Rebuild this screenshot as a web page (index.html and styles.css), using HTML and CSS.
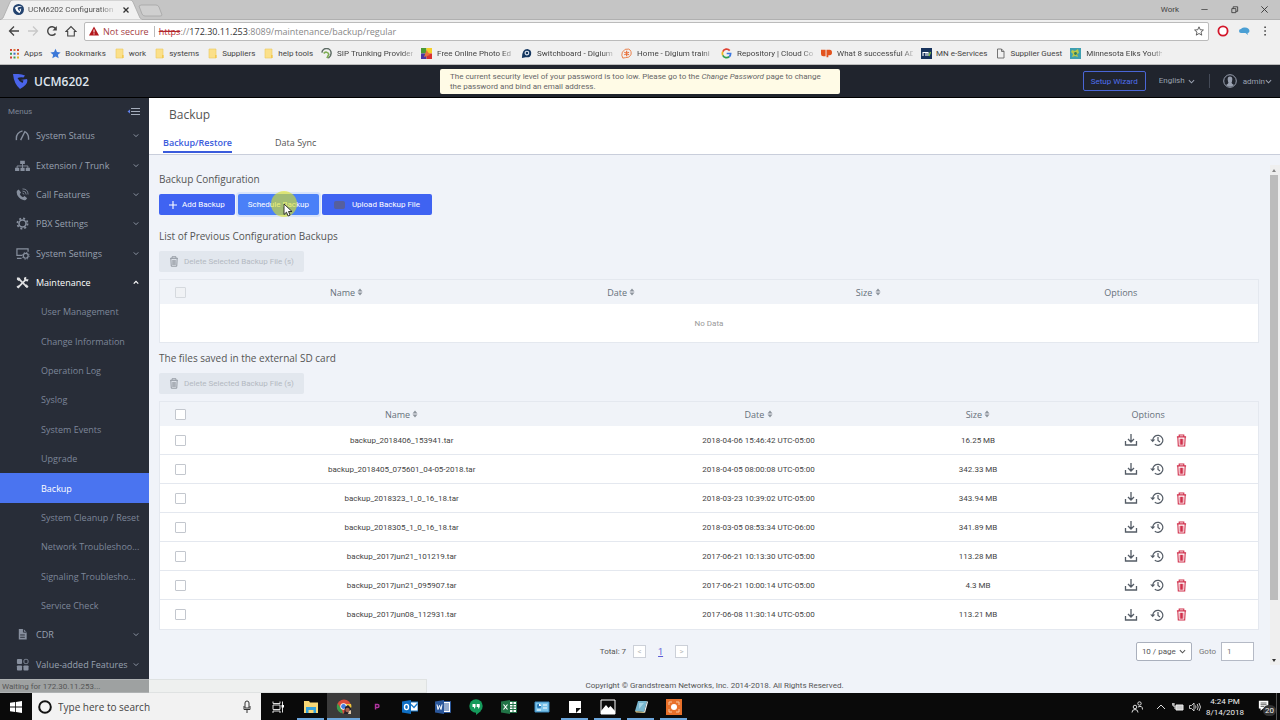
FILE: index.html
```html
<!DOCTYPE html>
<html lang="en">
<head>
  <meta charset="UTF-8">
  <meta name="viewport" content="width=device-width, initial-scale=1.0">
  <title>UCM6202 Configuration</title>
  <link rel="stylesheet" href="styles.css">
</head>
<body>
  <!-- shared icons -->
  <svg class="sprite" aria-hidden="true">
    <symbol id="i-down" viewBox="0 0 8 8"><path d="M1 2.5l3 3 3-3" fill="none" stroke="currentColor" stroke-width="1.2"/></symbol>
    <symbol id="i-up" viewBox="0 0 8 8"><path d="M1 5.5l3-3 3 3" fill="none" stroke="currentColor" stroke-width="1.6"/></symbol>
    <symbol id="i-folder" viewBox="0 0 11 11"><path d="M2 1h7v9H2z" fill="#fbe08a" stroke="#ecc95c" stroke-width=".6"/><path d="M8 7h1.600v3H8z" fill="#f3c94f"/></symbol>
    <symbol id="i-sort" viewBox="0 0 6 8"><path d="M.5 3.400L3 .4l2.500 3zM.5 4.600L3 7.600l2.500-3z" fill="currentColor"/></symbol>
    <symbol id="i-trash" viewBox="0 0 12 14"><path d="M1 3h10M3.500 2.500V1h5v1.500M2 3.500l.5 9.500h7l.5-9.500M4.600 5v6.500M6 5v6.500M7.400 5v6.500" fill="none" stroke="currentColor" stroke-width="1.200"/></symbol>
    <symbol id="i-download" viewBox="0 0 14 14"><path d="M7 1v7.500M4 6l3 3 3-3M1.500 8v4h11V8" fill="none" stroke="currentColor" stroke-width="1.300"/></symbol>
    <symbol id="i-history" viewBox="0 0 14 14"><path d="M2.800 7.500a5 5 0 1 1 2 3.800M8 4v3.500l2 1.500" fill="none" stroke="currentColor" stroke-width="1.200"/><path d="M.2 6.500h5L2.700 9.300z" fill="currentColor"/></symbol>
  </svg>

  <header class="browser">
    <div class="tabstrip">
      <svg class="tab-shape" viewBox="0 0 165 20" aria-hidden="true">
        <path d="M0 20l3-2L10 2q1-2 3-2h117q2 0 3 2l7 16 3 2z" fill="#f1f1f1" stroke="#aaa" stroke-width=".8"/>
        <path d="M141 5h15q2 0 3 2l3 8q0 1-2 1h-15q-2 0-3-2l-3-8z" fill="#cfcfcf" stroke="#a5a5a5" stroke-width=".8"/>
      </svg>
      <div class="tab">
        <svg class="ico11" viewBox="0 0 12 12"><circle cx="6" cy="6" r="6" fill="#23436f"/><path d="M2 4q4-3 8-1-4 0-5 1 0 2 2 4l1-2H6l3-1q0 3-2 5-4-2-5-6z" fill="#fff"/></svg>
        <span class="tab-title">UCM6202 Configuration</span>
        <button class="plain tab-close" aria-label="Close tab"><svg viewBox="0 0 8 8"><path d="M1.500 1.500l5 5m0-5l-5 5" stroke="#333" stroke-width="1.300"/></svg></button>
      </div>
      <div class="window-buttons">
        <span class="profile">Work</span>
        <button class="plain" aria-label="Minimize"><svg viewBox="0 0 10 10"><path d="M1.500 5h7" stroke="#555"/></svg></button>
        <button class="plain" aria-label="Restore"><svg viewBox="0 0 10 10"><path d="M2 4h4.500v4.500H2zM3.500 4V2H8.500v5h-2" fill="none" stroke="#333" stroke-width=".9"/></svg></button>
        <button class="plain" aria-label="Close"><svg viewBox="0 0 10 10"><path d="M1.500 1.500l7 7m0-7l-7 7" stroke="#333"/></svg></button>
      </div>
    </div>

    <div class="toolbar">
      <button class="plain" aria-label="Back"><svg viewBox="0 0 12 12"><path d="M11 6H2M6 1.500L1.500 6 6 10.500" fill="none" stroke="#444" stroke-width="1.300"/></svg></button>
      <button class="plain" aria-label="Forward"><svg viewBox="0 0 12 12"><path d="M1 6h9M6 1.500L10.500 6 6 10.500" fill="none" stroke="#c8c8c8" stroke-width="1.300"/></svg></button>
      <button class="plain" aria-label="Reload"><svg viewBox="0 0 12 12"><path d="M9.500 8.500a4.300 4.300 0 1 1 0-5" fill="none" stroke="#444" stroke-width="1.400"/><path d="M10.800 1v4.500H6.500z" fill="#444"/></svg></button>
      <button class="plain" aria-label="Home"><svg viewBox="0 0 12 12"><path d="M1 6.500L6 1.500l5 5H9.300V11H2.700V6.500z" fill="none" stroke="#444" stroke-width="1.100"/></svg></button>
      <div class="address">
        <svg class="ico10" viewBox="0 0 10 10"><path d="M5 .5L10 9.500H0z" fill="#b3161b"/><path d="M5 3.500v3M5 7.300v1.200" stroke="#fff"/></svg>
        <span class="not-secure">Not secure</span>
        <span class="url"><s>https</s>://<b>172.30.11.253</b>:8089/maintenance/backup/regular</span>
        <svg class="ico10" viewBox="0 0 12 12"><path d="M6 1l1.500 3.500 3.800.3-2.900 2.500.9 3.700L6 9l-3.300 2 .9-3.700L.7 4.800l3.800-.3z" fill="none" stroke="#444"/></svg>
      </div>
      <button class="plain" aria-label="Ad blocker"><svg viewBox="0 0 12 12"><circle cx="6" cy="6" r="4.600" fill="#fff" stroke="#d3172b" stroke-width="1.800"/><path d="M5 3.500h2.500V8L6.500 9 5 8z" fill="#fff"/></svg></button>
      <button class="plain" aria-label="Extension"><svg viewBox="0 0 12 12"><path d="M1 6q0-2 2-2 1-2 4-1.500Q11 2.500 11.500 6 11.500 8 9.500 8l.5 2-2.500-2H3Q1 8 1 6z" fill="#4a9fd4"/></svg></button>
      <button class="plain" aria-label="Menu"><svg viewBox="0 0 12 12"><path d="M5.300 1.500h1.600v1.600H5.300zM5.300 5.200h1.600v1.600H5.300zM5.300 8.900h1.600v1.600H5.300z" fill="#444"/></svg></button>
    </div>

    <nav class="bookmarks">
      <a href="#"><svg viewBox="0 0 11 11"><path d="M1 1h2v2H1zM8 1h2v2H8zM1 8.500h2v2H1z" fill="#cf4436"/><path d="M4.500 1h2v2h-2zM8 4.700h2v2H8z" fill="#d9752f"/><path d="M1 4.700h2v2H1zM4.500 8.500h2v2h-2z" fill="#3f9b4f"/><path d="M4.500 4.700h2v2h-2z" fill="#3c6fc4"/><path d="M8 8.500h2v2H8z" fill="#d9b52f"/></svg><span>Apps</span></a>
      <a href="#"><svg viewBox="0 0 12 12"><path d="M6 .8l1.600 3.600 4 .4-3 2.600.9 3.900L6 9.200l-3.500 2.100.9-3.900-3-2.600 4-.4z" fill="#3b78d8"/></svg><span>Bookmarks</span></a>
      <a href="#"><svg><use href="#i-folder"/></svg><span>work</span></a>
      <a href="#"><svg><use href="#i-folder"/></svg><span>systems</span></a>
      <a href="#"><svg><use href="#i-folder"/></svg><span>Suppliers</span></a>
      <a href="#"><svg><use href="#i-folder"/></svg><span>help tools</span></a>
      <a href="#" class="long"><svg viewBox="0 0 12 12"><path d="M1 5a5 5 0 0 1 10 1q0 3-3 5" fill="none" stroke="#5c6a63" stroke-width="1.600"/><path d="M3 6a3 3 0 0 1 5.500 1l-2 4" fill="none" stroke="#7fae54" stroke-width="1.800"/></svg><span>SIP Trunking Provider</span></a>
      <a href="#" class="long"><svg viewBox="0 0 11 11"><path d="M0 0h5.500v5.500H0z" fill="#4a9a34"/><path d="M5.500 0H11v5.500H5.500z" fill="#f4cf29"/><path d="M0 5.500h5.500V11H0z" fill="#4935a5"/><path d="M5.500 5.500H11V11H5.500z" fill="#d93131"/><path d="M5.500 2L9 7 3 9z" fill="#e9733a"/></svg><span>Free Online Photo Ed</span></a>
      <a href="#" class="long"><svg viewBox="0 0 12 12"><path d="M1 11q0-10 6-10 5 1 4 6-1 4-6 3z" fill="#14365f"/><circle cx="6.500" cy="5.500" r="2" fill="none" stroke="#dfe8f2" stroke-width="1.200"/></svg><span>Switchboard - Digium</span></a>
      <a href="#" class="long"><svg viewBox="0 0 12 12"><path d="M2 11Q0 8 1.500 4.500 4 0 8.500 1.200 12 3 10.800 7.500 9 11 5 10.500z" fill="none" stroke="#e8773e"/><path d="M6.200 3v6M3.600 4.500l5.200 3M8.800 4.500l-5.200 3" stroke="#e8662c" stroke-width="1.200"/></svg><span>Home - Digium traini</span></a>
      <a href="#" class="long"><svg viewBox="0 0 12 12"><path d="M9.500 2.800A4.500 4.500 0 0 0 2 4" fill="none" stroke="#e04334" stroke-width="1.900"/><path d="M2 4a4.500 4.500 0 0 0 0 4" fill="none" stroke="#f2b61f" stroke-width="1.900"/><path d="M2 8a4.500 4.500 0 0 0 7 1.500" fill="none" stroke="#2f9f50" stroke-width="1.900"/><path d="M6.200 6h4.300q0 2.300-1.500 3.500" fill="none" stroke="#3b78e0" stroke-width="1.900"/></svg><span>Repository | Cloud Co</span></a>
      <a href="#" class="long"><svg viewBox="0 0 12 12"><path d="M0 2h5v7H2.500Q0 9 0 6.500zM6 2h3.500Q12 2 12 5T9.500 8H8v2H6z" fill="#e2531f"/></svg><span>What 8 successful AD</span></a>
      <a href="#"><svg viewBox="0 0 11 11"><path d="M0 0h11v11H0z" fill="#17335c"/><path d="M2 8V4.500h3V8M5 4.500h2V8" fill="none" stroke="#fff" stroke-width="1.100"/><path d="M8 8l1.500-4" stroke="#7fbf4a" stroke-width="1.400"/></svg><span>MN e-Services</span></a>
      <a href="#"><svg viewBox="0 0 11 11"><path d="M2.500 1h4l2.500 2.500V10h-6.500zM6.500 1v2.500H9" fill="none" stroke="#666" stroke-width=".9"/></svg><span>Supplier Guest</span></a>
      <a href="#" class="long"><svg viewBox="0 0 11 11"><path d="M0 0h11v11H0z" fill="#3f9fb0"/><path d="M2 2l3 1 3-2 1 4-2 1 1 3-3-1-3 1 1-3-2-2z" fill="#b9c84a"/><circle cx="5.500" cy="5.500" r="1.400" fill="#2f7a58"/></svg><span>Minnesota Elks Youth</span></a>
    </nav>
  </header>

  <div class="app">
    <header class="app-header">
      <div class="brand">
        <svg viewBox="0 0 15 15"><path d="M0 0q7-.5 12 1.500L10.500 3.500Q7 3 4.500 4 6 7.500 9.500 9l1-2.500L7.500 6 14 5q2 5-7 10Q1 10 0 0z" fill="#4a64ea"/></svg>
        <span>UCM6202</span>
      </div>
      <p class="notice">The current security level of your password is too low. Please go to the <em>Change Password</em> page to change<br>the password and bind an email address.</p>
      <div class="header-tools">
        <button class="wizard">Setup Wizard</button>
        <label class="pick lang"><select aria-label="Language"><option>English</option></select><svg><use href="#i-down"/></svg></label>
        <button class="plain user">
          <svg class="avatar" viewBox="0 0 14 14"><circle cx="7" cy="7" r="6.300" fill="none" stroke="#9aa1b0"/><path d="M7 2.500q2.500 0 2.300 3Q9 8 8.500 8.500q0 1 2.500 2.500-1.500 1.800-4 1.800T3 11q2.500-1.500 2.500-2.500Q5 8 4.700 5.500q-.2-3 2.300-3z" fill="#9aa1b0"/></svg>
          <span>admin</span><svg class="chev"><use href="#i-down"/></svg>
        </button>
      </div>
    </header>

    <div class="app-body">
      <aside class="sidebar">
        <div class="menus">Menus
          <button class="plain" aria-label="Collapse menu"><svg viewBox="0 0 13 9"><path d="M4 1.500h9M4 4.500h9M4 7.500h9" stroke="#a5adbb" stroke-width="1.100"/><path d="M3 2.500v4L.5 4.500z" fill="#5f7fe8"/></svg></button>
        </div>
        <ul class="nav">
          <li><a href="#"><svg class="nav-icon" viewBox="0 0 16 14"><path d="M1.500 12q-1-8 6.500-10M10 2.500q5 2 4.500 9M6 12L10.500 3" fill="none" stroke="currentColor" stroke-width="1.500"/></svg><span>System Status</span><svg class="chev"><use href="#i-down"/></svg></a></li>
          <li><a href="#"><svg class="nav-icon" viewBox="0 0 16 14"><path d="M5.500 2h5v3.500h-5zM0 9.500h4.500V13H0zM5.800 9.500h4.500V13H5.800zM11.500 9.500H16V13h-4.500z" fill="currentColor"/><path d="M8 5v5M2.200 10V7.500h11.600V10" fill="none" stroke="currentColor"/></svg><span>Extension / Trunk</span><svg class="chev"><use href="#i-down"/></svg></a></li>
          <li><a href="#"><svg class="nav-icon" viewBox="0 0 16 14"><path d="M2 3l2-1.500L6.500 5 5 6.500q1 2.500 3.500 3.500l1.700-1.300L13 11l-1.500 2Q7 14 4 10 1 6.500 2 3z" fill="currentColor"/><path d="M8 5.500q1.500 0 1.500 1.500M8 3.300q4 0 4 3.700M8 1q6 0 6 6" fill="none" stroke="currentColor" stroke-width=".9"/></svg><span>Call Features</span><svg class="chev"><use href="#i-down"/></svg></a></li>
          <li><a href="#"><svg class="nav-icon" viewBox="0 0 16 14"><circle cx="8" cy="7" r="3.800" fill="none" stroke="currentColor" stroke-width="1.700"/><circle cx="8" cy="7" r="5.500" fill="none" stroke="currentColor" stroke-width="1.800" stroke-dasharray="2.160 2.160"/></svg><span>PBX Settings</span><svg class="chev"><use href="#i-down"/></svg></a></li>
          <li><a href="#"><svg class="nav-icon" viewBox="0 0 16 14"><path d="M7.500 9H2V2h12v3M2 12.300h5" fill="none" stroke="currentColor" stroke-width="1.300"/><circle cx="11.500" cy="9.500" r="2.600" fill="none" stroke="currentColor" stroke-width="1.300"/><circle cx="11.500" cy="9.500" r="3.700" fill="none" stroke="currentColor" stroke-dasharray="1.450 1.450"/></svg><span>System Settings</span><svg class="chev"><use href="#i-down"/></svg></a></li>
          <li class="open"><a href="#"><svg class="nav-icon" viewBox="0 0 16 14"><path d="M3 12.500L11 4.500M4 3l9 9" stroke="currentColor" stroke-width="1.900"/><path d="M10 5l-.5-3L12 .8v2.700h2.500l-.8 2.500zM2 1.500l2.500 0 1.500 2-2 2-2-1.500zM10.500 11l2-2 2 2.500-1.500 1.500zM1.500 11.500l2-1.500 1.500 1.500L3.500 13.500z" fill="currentColor"/></svg><span>Maintenance</span><svg class="chev"><use href="#i-up"/></svg></a></li>
          <li class="sub"><a href="#"><span>User Management</span></a></li>
          <li class="sub"><a href="#"><span>Change Information</span></a></li>
          <li class="sub"><a href="#"><span>Operation Log</span></a></li>
          <li class="sub"><a href="#"><span>Syslog</span></a></li>
          <li class="sub"><a href="#"><span>System Events</span></a></li>
          <li class="sub"><a href="#"><span>Upgrade</span></a></li>
          <li class="sub active"><a href="#"><span>Backup</span></a></li>
          <li class="sub"><a href="#"><span>System Cleanup / Reset</span></a></li>
          <li class="sub"><a href="#"><span>Network Troubleshoo...</span></a></li>
          <li class="sub"><a href="#"><span>Signaling Troublesho...</span></a></li>
          <li class="sub"><a href="#"><span>Service Check</span></a></li>
          <li><a href="#"><svg class="nav-icon" viewBox="0 0 16 14"><path d="M4 1h5l3.500 3.500V12.500H4z" fill="currentColor"/><path d="M9 1v3.500h3.500M5.500 7.500h5M5.500 10h5" fill="none" stroke="#282d38"/></svg><span>CDR</span><svg class="chev"><use href="#i-down"/></svg></a></li>
          <li><a href="#"><svg class="nav-icon" viewBox="0 0 16 14"><rect x="2" y="1" width="5.500" height="5.500" rx="1" fill="currentColor"/><rect x="2" y="8" width="5.500" height="5.500" rx="1" fill="currentColor"/><rect x="9" y="8" width="5.500" height="5.500" rx="1" fill="currentColor"/><rect x="9.500" y="1.500" width="4.500" height="4.500" rx="1.500" fill="none" stroke="currentColor"/></svg><span>Value-added Features</span><svg class="chev"><use href="#i-down"/></svg></a></li>
        </ul>
      </aside>

      <main class="main">
        <div class="page-head">
          <h1>Backup</h1>
          <nav class="tabs">
            <a href="#" class="current">Backup/Restore</a>
            <a href="#">Data Sync</a>
          </nav>
        </div>

        <div class="scroll-area">
          <div class="content">
            <h2>Backup Configuration</h2>
            <div class="actions">
              <button class="btn"><svg viewBox="0 0 8 8"><path d="M4 0v8M0 4h8" stroke="#fff" stroke-width="1.100"/></svg>Add Backup</button>
              <button class="btn hover">Schedule Backup
                <span class="pointer"><svg viewBox="0 0 10 14"><path d="M1 1v10.500l2.500-2.300 1.600 3.800 2-.9-1.600-3.600H9z" fill="#fff" stroke="#222" stroke-width=".9"/></svg></span>
              </button>
              <button class="btn upload"><i></i>Upload Backup File</button>
            </div>

            <h2>List of Previous Configuration Backups</h2>
            <button class="btn disabled" disabled><svg><use href="#i-trash"/></svg>Delete Selected Backup File (s)</button>
            <table class="grid local">
              <thead>
                <tr>
                  <th class="c-check"><input type="checkbox" aria-label="Select all" disabled></th>
                  <th class="c-name">Name <svg><use href="#i-sort"/></svg></th>
                  <th class="c-date">Date <svg><use href="#i-sort"/></svg></th>
                  <th class="c-size">Size <svg><use href="#i-sort"/></svg></th>
                  <th>Options</th>
                </tr>
              </thead>
              <tbody>
                <tr><td colspan="5" class="empty">No Data</td></tr>
              </tbody>
            </table>

            <h2 class="tight">The files saved in the external SD card</h2>
            <button class="btn disabled" disabled><svg><use href="#i-trash"/></svg>Delete Selected Backup File (s)</button>
            <table class="grid sdcard">
              <thead>
                <tr>
                  <th class="c-check"><input type="checkbox" aria-label="Select all"></th>
                  <th class="c-name">Name <svg><use href="#i-sort"/></svg></th>
                  <th class="c-date">Date <svg><use href="#i-sort"/></svg></th>
                  <th class="c-size">Size <svg><use href="#i-sort"/></svg></th>
                  <th>Options</th>
                </tr>
              </thead>
              <tbody id="files"></tbody>
            </table>

            <div class="pagination">
              <div class="pages">
                <span>Total: 7</span>
                <button class="step" aria-label="Previous page">&lt;</button>
                <a href="#">1</a>
                <button class="step" aria-label="Next page">&gt;</button>
              </div>
              <label class="pick per-page"><select aria-label="Rows per page"><option>10 / page</option></select><svg><use href="#i-down"/></svg></label>
              <label class="goto">Goto <input type="text" value="1"></label>
            </div>
          </div>
          <div class="scrollbar"><span class="arrow up"></span><span class="thumb"></span><span class="arrow down"></span></div>
        </div>
        <footer class="copyright">Copyright © Grandstream Networks, Inc. 2014-2018. All Rights Reserved.</footer>
      </main>
    </div>
    <div class="status">Waiting for 172.30.11.253...</div>
  </div>

  <footer class="taskbar">
    <button class="plain start" aria-label="Start"><svg viewBox="0 0 12 12"><path d="M0 1.800L5.200 1v4.600H0zM6 .9L12 0v5.600H6zM0 6.400h5.200V11L0 10.200zM6 6.400h6V12l-6-.9z" fill="#fff"/></svg></button>
    <label class="search">
      <svg viewBox="0 0 14 14"><circle cx="7" cy="7" r="5.800" fill="none" stroke="#111" stroke-width="2"/></svg>
      <input type="text" placeholder="Type here to search" aria-label="Search">
      <svg viewBox="0 0 14 14"><path d="M5 3q0-2 2-2t2 2v5H5zM4 6v3.500h6V6M7 9.500V13" fill="none" stroke="#333"/></svg>
    </label>
    <div class="pinned">
      <button class="plain" aria-label="Task view"><svg viewBox="0 0 16 16"><path d="M3 6h7v4.500H3zM3 2.500v2h7v-2M3 14v-2h7v2M12.500 2.500v11" fill="none" stroke="#ddd"/><path d="M11.500 6h2.500v2.500h-2.500z" fill="#fff"/></svg></button>
      <button class="plain running" aria-label="File Explorer"><svg viewBox="0 0 16 16"><path d="M1 2h5l1 1.500h8V14H1z" fill="#f8d775"/><path d="M3 8h10v6h-2.500v-3h-5v3H3z" fill="#35a3dc"/></svg></button>
      <button class="plain running focus" aria-label="Chrome"><svg viewBox="0 0 16 16"><circle cx="8" cy="7.500" r="7" fill="#d94b3c"/><path d="M1.500 4.500L6 11l1 3.500A7 7 0 0 1 1.500 4.500z" fill="#3b9b4c"/><path d="M8 5h7a7 7 0 0 1-5 9z" fill="#efc33a"/><circle cx="7.500" cy="7.500" r="3.200" fill="#fff"/><circle cx="7.500" cy="7.500" r="2.400" fill="#3f7be0"/><path d="M9 8l3-2 3 3v6H8z" fill="#24202a"/><circle cx="11.500" cy="11" r="2.200" fill="#a4604f"/><path d="M13 12l2-1v4h-3z" fill="#e0c8a8"/></svg></button>
      <button class="plain" aria-label="Publisher"><svg viewBox="0 0 16 16"><path d="M6.500 10.500V5.500h2q1.500 0 1.500 1.500T8.500 8.500H7" fill="none" stroke="#b0359f" stroke-width="1.400"/></svg></button>
      <button class="plain" aria-label="Outlook"><svg viewBox="0 0 16 16"><path d="M8 3h8v9H8z" fill="#fff" stroke="#1a78c8"/><path d="M9 5.500l3 3 3.500-4" fill="none" stroke="#1a78c8" stroke-width="1.300"/><path d="M0 2.500L9 1v14l-9-1.500z" fill="#0f6fc4"/><ellipse cx="4.500" cy="8" rx="2" ry="2.600" fill="none" stroke="#fff" stroke-width="1.400"/></svg></button>
      <button class="plain" aria-label="Word"><svg viewBox="0 0 16 16"><path d="M8 2.500h7.500v11H8z" fill="#fff" stroke="#2b579a"/><path d="M9 5h5M9 7h5M9 9h5M9 11h5" stroke="#2b579a"/><path d="M0 2.500L9 1v14l-9-1.500z" fill="#2b579a"/><path d="M2 5.500l1 5 1.500-4 1.500 4 1-5" fill="none" stroke="#fff"/></svg></button>
      <button class="plain" aria-label="Hangouts"><svg viewBox="0 0 16 16"><circle cx="8" cy="7" r="6.700" fill="#159a5b"/><path d="M8 12h5l-5 4z" fill="#159a5b"/><path d="M4.500 5h3v3L6 10V8H4.500zM8.700 5h3v3l-1.500 2V8H8.700z" fill="#fff"/></svg></button>
      <button class="plain" aria-label="Excel"><svg viewBox="0 0 16 16"><path d="M8 2.500h7.500v11H8z" fill="#fff" stroke="#217346"/><path d="M9 5.500h6M9 8h6M9 10.500h6M12 3v10" stroke="#217346"/><path d="M0 2.500L9 1v14l-9-1.500z" fill="#217346"/><path d="M2.500 5.500l4 5M6.500 5.500l-4 5" stroke="#fff" stroke-width="1.200"/></svg></button>
      <button class="plain" aria-label="Control panel"><svg viewBox="0 0 16 16"><path d="M1 3h14v10H1z" fill="#7cc4ea" stroke="#3a8ac0"/><circle cx="5" cy="7" r="2.200" fill="#2a78b4"/><path d="M5 7V4.800A2.200 2.200 0 0 1 7.200 7z" fill="#fff"/><path d="M9 6h4M9 9h4M3 11h4" stroke="#fff"/></svg></button>
      <button class="plain running" aria-label="Sticky notes"><svg viewBox="0 0 16 16"><path d="M2 2h12v12H2z" fill="#fff"/><path d="M9 14V9h5z" fill="#111"/><path d="M10 14l4-4v4z" fill="#fff"/></svg></button>
      <button class="plain running" aria-label="Photos"><svg viewBox="0 0 16 16"><path d="M1 1h14v14H1z" fill="#0b0b0b" stroke="#fff"/><path d="M1 12l5-6 2.500 3L10.500 7 15 12v3H1z" fill="#fff"/></svg></button>
      <button class="plain running" aria-label="Notepad"><svg viewBox="0 0 16 16"><path d="M5 2l9 0-3 11-9-1z" fill="#79b7cf"/><path d="M14 2l1 1-3 11-1-1z" fill="#e9eef0"/><path d="M2 12l9 1 1 1-9-.5z" fill="#d8c98e"/><path d="M6 4l5 0-5 6z" fill="#a8d5e6"/></svg></button>
      <button class="plain running" aria-label="Recorder"><svg viewBox="0 0 16 16"><path d="M0 0h16v16H0z" fill="#e8702a"/><path d="M3 6V3h3M10 3h3v3M13 10v3h-3M6 13H3v-3" fill="none" stroke="#f7c6a0"/><circle cx="8" cy="8" r="3" fill="#fff"/></svg></button>
    </div>
    <div class="tray">
      <svg viewBox="0 0 12 12"><circle cx="4" cy="6" r="1.800" fill="none" stroke="#ddd"/><path d="M1 11.500q0-3 3-3t3 3" fill="none" stroke="#ddd"/><circle cx="8.500" cy="2.500" r="1.700" fill="none" stroke="#ddd"/><path d="M7 6q4.500-2 4.500 2.500" fill="none" stroke="#ddd"/></svg>
      <svg class="tray-up" viewBox="0 0 12 12"><path d="M2 8l4-4 4 4" fill="none" stroke="#ddd"/></svg>
      <svg viewBox="0 0 12 12"><path d="M4 4h7v5H4z" fill="#ccc" stroke="#eee"/><path d="M0 3h3M1 2v3h2v3" fill="none" stroke="#eee"/></svg>
      <svg viewBox="0 0 12 12"><path d="M.5 4.500h2L5 2v8L2.500 7.500h-2z" fill="none" stroke="#ddd" stroke-width=".9"/><path d="M6.500 4.500q1 1.500 0 3M8.200 3q2 3 0 6M10 2q3 4 0 8" fill="none" stroke="#ddd" stroke-width=".9"/></svg>
      <div class="clock">4:24 PM<br>8/14/2018</div>
      <div class="notify"><svg viewBox="0 0 14 14"><path d="M1 1h11v9H6l-3 2.500V10H1z" fill="#fff"/><path d="M3 3.500h7M3 5.500h7M3 7.500h4" stroke="#222" stroke-width=".8"/></svg><span class="count">20</span></div>
    </div>
  </footer>

  <script>
    const files = [
      ["backup_2018406_153941.tar", "2018-04-06 15:46:42 UTC-05:00", "16.25 MB"],
      ["backup_2018405_075601_04-05-2018.tar", "2018-04-05 08:00:08 UTC-05:00", "342.33 MB"],
      ["backup_2018323_1_0_16_18.tar", "2018-03-23 10:39:02 UTC-05:00", "343.94 MB"],
      ["backup_2018305_1_0_16_18.tar", "2018-03-05 08:53:34 UTC-06:00", "341.89 MB"],
      ["backup_2017jun21_101219.tar", "2017-06-21 10:13:30 UTC-05:00", "113.28 MB"],
      ["backup_2017jun21_095907.tar", "2017-06-21 10:00:14 UTC-05:00", "4.3 MB"],
      ["backup_2017jun08_112931.tar", "2017-06-08 11:30:14 UTC-05:00", "113.21 MB"]
    ];

    document.getElementById("files").innerHTML = files.map(([name, date, size]) => `
      <tr>
        <td><input type="checkbox" aria-label="Select ${name}"></td>
        <td>${name}</td>
        <td>${date}</td>
        <td>${size}</td>
        <td class="options"><div>
          <button class="plain" aria-label="Download"><svg><use href="#i-download"/></svg></button>
          <button class="plain" aria-label="Restore"><svg><use href="#i-history"/></svg></button>
          <button class="plain delete" aria-label="Delete"><svg><use href="#i-trash"/></svg></button>
        </div></td>
      </tr>`).join("");
  </script>
</body>
</html>
```
FILE: styles.css
```css
* {
  margin: 0;
  padding: 0;
  box-sizing: border-box;
}

body {
  height: 100vh;
  display: flex;
  flex-direction: column;
  overflow: hidden;
  font-family: Roboto, "Open Sans", sans-serif;
  font-size: 8px;
  color: #555;
}

button, input, select {
  font: inherit;
  color: inherit;
}

a {
  color: inherit;
  text-decoration: none;
}

svg {
  display: block;
  flex: none;
}

.sprite {
  position: absolute;
  width: 0;
  height: 0;
}

.plain {
  border: none;
  background: none;
  display: flex;
  align-items: center;
  justify-content: center;
  flex: none;
}

.chev {
  width: 7px;
  height: 7px;
}

.ico10 {
  width: 10px;
  height: 10px;
}

.ico11 {
  width: 11px;
  height: 11px;
}

.brand, .nav, .page-head, h2, th, .address, .search {
  font-family: "Open Sans", "Noto Sans", sans-serif;
}

/* browser */
.browser {
  flex: none;
  background: #f0f0f0;
}

.tabstrip {
  position: relative;
  height: 20px;
  display: flex;
  justify-content: space-between;
  background: #c5c5c5;
  border-bottom: 1px solid #b0b0b0;
}

.tab-shape {
  position: absolute;
  left: 0;
  top: 0;
  width: 165px;
  height: 20px;
}

.tab {
  position: relative;
  width: 130px;
  padding-left: 13px;
  display: flex;
  align-items: center;
  gap: 4px;
}

.tab-title {
  flex: 1;
  white-space: nowrap;
  -webkit-mask-image: linear-gradient(90deg, #000 80%, transparent);
}

.tab-close svg {
  width: 8px;
  height: 8px;
}

.window-buttons {
  display: flex;
  align-items: center;
  gap: 21px;
  padding-right: 11px;
}

.window-buttons svg {
  width: 9px;
  height: 9px;
}

.profile {
  color: #444;
}

.toolbar {
  height: 22px;
  padding: 0 8px;
  display: flex;
  align-items: center;
  gap: 7px;
}

.toolbar button svg {
  width: 12px;
  height: 12px;
}

.address {
  flex: 1;
  height: 19px;
  padding: 0 4px;
  display: flex;
  align-items: center;
  gap: 4px;
  background: #fff;
  border: 1px solid #bbb;
  border-radius: 2px;
  font-size: 9px;
}

/* extension buttons right of the address bar */
.address ~ button {
  width: 14px;
}

.not-secure {
  color: #a54044;
  padding-right: 5px;
  border-right: 1px solid #bbb;
  line-height: 11px;
}

.url {
  flex: 1;
  color: #888;
}

.url b {
  font-weight: normal;
  color: #333;
}

.url s {
  color: #b3262b;
}

.bookmarks {
  height: 23px;
  padding-left: 9px;
  display: flex;
  align-items: center;
  gap: 8px;
  color: #444;
  border-bottom: 1px solid #bbb;
}

.bookmarks a {
  display: flex;
  align-items: center;
  gap: 4px;
  white-space: nowrap;
}

.bookmarks svg {
  width: 11px;
  height: 11px;
}

.bookmarks .long {
  gap: 5px;
}

.bookmarks .long span {
  width: 76px;
  -webkit-mask-image: linear-gradient(90deg, #000 85%, transparent 105%);
}

/* app */
.app {
  position: relative;
  flex: 1;
  min-height: 0;
  display: flex;
  flex-direction: column;
}

.app-header {
  height: 33px;
  flex: none;
  display: grid;
  grid-template-columns: 1fr auto 1fr;
  align-items: center;
  background: #20242d;
  border-bottom: 1px solid #000;
  color: #9aa1b0;
}

.brand {
  display: flex;
  align-items: center;
  gap: 6px;
  padding-left: 13px;
  font-size: 12px;
  font-weight: 600;
  color: #dfe5ee;
}

.brand svg {
  width: 15px;
  height: 15px;
}

.notice {
  width: 400px;
  padding: 3px 10px 2px;
  background: #fffbe6;
  border-radius: 2px;
  line-height: 10px;
  color: #666;
  white-space: nowrap;
}

.header-tools {
  display: flex;
  align-items: center;
  justify-content: flex-end;
  padding-right: 8px;
}

.wizard {
  height: 20px;
  padding: 0 7px;
  margin-right: 13px;
  background: none;
  border: 1px solid #4a66d6;
  border-radius: 2px;
  color: #4f6fee;
}

.pick {
  display: flex;
  align-items: center;
  gap: 3px;
}

.pick select {
  appearance: none;
  background: none;
  border: none;
}

.pick svg {
  width: 7px;
  height: 7px;
}

.lang {
  padding-right: 14px;
  border-right: 1px solid #444a57;
  line-height: 14px;
}

.user {
  padding-left: 13px;
}

.user span {
  padding-left: 6px;
}

.avatar {
  width: 14px;
  height: 14px;
}

.app-body {
  flex: 1;
  min-height: 0;
  display: flex;
}

/* sidebar */
.sidebar {
  width: 149px;
  flex: none;
  display: flex;
  flex-direction: column;
  padding-bottom: 14px;
  background: #282d38;
  color: #98a1b0;
}

.menus {
  height: 23px;
  padding: 4px 9px 0 8px;
  display: flex;
  align-items: center;
  justify-content: space-between;
  color: #7d8595;
}

.menus svg {
  width: 13px;
  height: 9px;
}

.nav {
  flex: 1;
  display: grid;
  grid-auto-rows: 1fr;
  list-style: none;
  font-size: 9px;
}

.nav a {
  height: 100%;
  padding: 0 12px 0 15px;
  display: flex;
  align-items: center;
  gap: 6px;
  white-space: nowrap;
}

.nav a span {
  flex: 1;
}

.nav .chev {
  width: 6px;
  margin-right: 0;
}

.nav-icon {
  width: 15px;
  height: 13px;
  opacity: 0.85;
}

.nav .open {
  color: #fff;
}

.nav .sub a {
  padding: 0 0 0 41px;
  color: #7d8698;
}

.nav .active a {
  background: #4a74f0;
  color: #fff;
}

/* main */
.main {
  flex: 1;
  min-width: 0;
  display: flex;
  flex-direction: column;
  background: #f0f3f9;
}

.page-head {
  height: 57px;
  flex: none;
  display: flex;
  flex-direction: column;
  justify-content: space-between;
  padding: 8px 14px 0;
  background: #fff;
  border-bottom: 1px solid #c9cedb;
}

h1 {
  padding-left: 6px;
  font-size: 12px;
  line-height: 18px;
  font-weight: normal;
}

.tabs {
  display: flex;
  gap: 43px;
  font-size: 9px;
  padding-bottom: 1px;
}

.tabs a {
  line-height: 16px;
  border-bottom: 2px solid transparent;
}

.tabs .current {
  color: #3a5bdc;
  font-weight: 600;
  border-color: #3a5bdc;
}

.scroll-area {
  flex: 1;
  min-height: 0;
  display: flex;
}

.content {
  flex: 1;
  padding: 14px 11px 0 10px;
}

h2 {
  margin: 11px 0 5px;
  font-size: 10px;
  line-height: 20px;
  font-weight: normal;
}

h2:first-child {
  margin-top: 0;
}

h2.tight {
  margin-top: 5px;
}

.actions {
  display: flex;
  gap: 3px;
}

.btn {
  position: relative;
  height: 21px;
  padding: 0 10px;
  display: flex;
  align-items: center;
  gap: 5px;
  border: none;
  border-radius: 2px;
  background: #3f63f2;
  color: #fff;
}

.btn svg {
  width: 8px;
  height: 8px;
}

.btn.hover {
  background: #4a80f8;
  box-shadow: 0 0 0 2px #d8e4fa;
}

.upload {
  padding: 0 12px;
}

.upload i {
  width: 11px;
  height: 8px;
  margin-right: 2px;
  background: #565f9e;
  border-radius: 2px;
}

.pointer {
  position: absolute;
  left: 33px;
  top: -3px;
  width: 26px;
  height: 26px;
  border-radius: 50%;
  background: rgba(222, 228, 30, 0.6);
}

.pointer svg {
  position: absolute;
  left: 12px;
  top: 12px;
  width: 10px;
  height: 14px;
}

.btn.disabled {
  background: #e2e7ee;
  color: #b3b9c1;
}

.btn.disabled svg {
  width: 10px;
  height: 11px;
  color: #8d949c;
}

/* tables */
.grid {
  width: 100%;
  margin-top: 7px;
  table-layout: fixed;
  border-collapse: separate;
  border-spacing: 0;
  border: 1px solid #e4e8ef;
  text-align: center;
  background: #fff;
}

.grid th {
  height: 24px;
  background: #f0f3f8;
  font-size: 9px;
  font-weight: normal;
  color: #66707a;
}

.grid th svg {
  display: inline-block;
  width: 6px;
  height: 8px;
  color: #8d949c;
}

.grid td {
  height: 29px;
  border-bottom: 1px solid #e4e8ef;
  color: #444;
}

.grid tr:last-child td {
  border-bottom: none;
}

.grid td.empty {
  height: 38px;
  color: #999;
}

.c-check {
  width: 44px;
}

.local .c-name {
  width: 26%;
}

.local .c-date {
  width: 24%;
}

.local .c-size {
  width: 21%;
}

.sdcard .c-name {
  width: 36%;
}

.sdcard .c-date {
  width: 29%;
}

.sdcard .c-size {
  width: 11%;
}

.grid input {
  appearance: none;
  display: block;
  width: 11px;
  height: 11px;
  margin-left: 15px;
  background: #fff;
  border: 1px solid #c3c7ce;
  border-radius: 1px;
}

.grid input:disabled {
  background: #f0f2f5;
  border-color: #d5d9de;
}

.options div {
  display: flex;
  justify-content: center;
  gap: 12px;
  padding-left: 15px;
}

.options svg {
  width: 14px;
  height: 14px;
  color: #545c66;
}

.options .delete svg {
  width: 11px;
  height: 13px;
  color: #d02f4b;
}

/* pagination */
.pagination {
  margin-top: 12px;
  padding-right: 5px;
  height: 19px;
  display: flex;
  align-items: center;
  gap: 7px;
}

.pages {
  flex: 1;
  display: flex;
  align-items: center;
  justify-content: center;
  gap: 7px;
}

.pages a {
  width: 15px;
  text-align: center;
  text-decoration: underline;
  font-size: 9px;
  color: #5b5bd6;
}

.step {
  width: 13px;
  height: 13px;
  background: #fff;
  border: 1px solid #ccd0d8;
  color: #bbb;
  line-height: 8px;
}

.per-page {
  height: 19px;
  padding: 0 5px;
  background: #fff;
  border: 1px solid #aab0bd;
  border-radius: 2px;
}

.goto {
  display: flex;
  align-items: center;
  gap: 5px;
  color: #777;
}

.goto input {
  width: 33px;
  height: 19px;
  padding-left: 5px;
  border: 1px solid #b5bac6;
}

.scrollbar {
  width: 10px;
  flex: none;
  margin: 10px 0 0;
  padding: 0 2px 0 0;
  display: flex;
  flex-direction: column;
  background: #efefef;
}

.thumb {
  height: 85%;
  background: #bcbcbc;
}

.arrow {
  height: 10px;
  display: flex;
  align-items: center;
  justify-content: center;
}

.arrow::before {
  content: "";
  border: 2px solid transparent;
  border-bottom: 3px solid #888;
  border-top: none;
}

.arrow.down {
  margin-top: auto;
}

.arrow.down::before {
  border-bottom: none;
  border-top: 3px solid #333;
}

.copyright {
  height: 28px;
  padding-top: 16px;
  text-align: center;
}

.status {
  position: absolute;
  left: 0;
  bottom: 0;
  width: 427px;
  height: 14px;
  padding-left: 2px;
  line-height: 13px;
  background: rgba(236, 238, 232, 0.6);
  border: 1px solid rgba(200, 204, 208, 0.4);
  border-left: none;
}

/* taskbar */
.taskbar {
  height: 27px;
  flex: none;
  display: flex;
  background: #0a0a0a;
}

.start {
  width: 32px;
}

.start svg {
  width: 12px;
  height: 12px;
}

.search {
  width: 229px;
  display: flex;
  align-items: center;
  padding: 0 7px 0 6px;
  gap: 6px;
  background: #f2f2f2;
}

.search svg {
  width: 14px;
  height: 14px;
}

.search input {
  flex: 1;
  min-width: 0;
  border: none;
  background: none;
  font-size: 10px;
}

.search input::placeholder {
  color: #444;
}

.pinned {
  flex: 1;
  display: flex;
}

.pinned button {
  width: 33px;
  padding: 2px 3px 0;
  border-bottom: 2px solid transparent;
}

.pinned svg {
  width: 16px;
  height: 16px;
}

.pinned .running {
  background: linear-gradient(#6ca6dc, #6ca6dc) center bottom / 27px 2px no-repeat border-box;
}

.pinned .focus {
  background: #3b3b3b;
  border-bottom-color: #6ca6dc;
}

.tray {
  display: flex;
  align-items: center;
  gap: 5px;
  padding-right: 3px;
  color: #eee;
}

.tray svg {
  width: 12px;
  height: 12px;
}

.tray .tray-up {
  margin-left: 7px;
}

.clock {
  width: 38px;
  text-align: center;
  line-height: 11px;
}

.notify {
  position: relative;
  width: 28px;
  height: 27px;
  padding: 7px 0 0 9px;
  border-right: 1px solid #555;
}

.count {
  position: absolute;
  left: 14px;
  top: 12px;
  width: 13px;
  height: 11px;
  border-radius: 6px;
  background: #333;
  line-height: 11px;
  text-align: center;
}
```
